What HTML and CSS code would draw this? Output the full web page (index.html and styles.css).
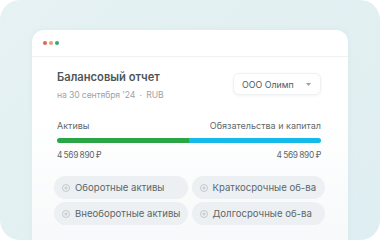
FILE: index.html
```html
<!DOCTYPE html>
<html lang="ru">
<head>
<meta charset="utf-8">
<link rel="stylesheet" href="styles.css">
</head>
<body>
<div class="frame">
  <div class="card">
    <div class="titlebar">
      <span class="dot red"></span><span class="dot orange"></span><span class="dot green"></span>
    </div>
    <div class="content">
      <div class="head">
        <div class="heading">
          <div class="title">Балансовый отчет</div>
          <div class="subtitle">на 30 сентября '24 <span class="sep">·</span> RUB</div>
        </div>
        <div class="select">
          <span>ООО Олимп</span>
          <svg class="caret" width="5" height="3" viewBox="0 0 5 3"><path d="M0 0h5L2.5 3z" fill="#9aa2a5"/></svg>
        </div>
      </div>
      <div class="row labels">
        <span>Активы</span>
        <span>Обязательства и капитал</span>
      </div>
      <div class="bar">
        <div class="bar-assets" style="width:50%"></div>
        <div class="bar-liab"></div>
      </div>
      <div class="row values">
        <span>4 569 890 ₽</span>
        <span>4 569 890 ₽</span>
      </div>
      <div class="chips">
        <div class="chip"><svg class="plus" width="8" height="8" viewBox="0 0 8 8"><circle cx="4" cy="4" r="3.5" fill="none" stroke="#b9c0c3" stroke-width="0.8"/><path d="M4 2.4v3.2M2.4 4h3.2" stroke="#b9c0c3" stroke-width="0.8"/></svg><span>Оборотные активы</span></div>
        <div class="chip"><svg class="plus" width="8" height="8" viewBox="0 0 8 8"><circle cx="4" cy="4" r="3.5" fill="none" stroke="#b9c0c3" stroke-width="0.8"/><path d="M4 2.4v3.2M2.4 4h3.2" stroke="#b9c0c3" stroke-width="0.8"/></svg><span>Краткосрочные об-ва</span></div>
        <div class="chip"><svg class="plus" width="8" height="8" viewBox="0 0 8 8"><circle cx="4" cy="4" r="3.5" fill="none" stroke="#b9c0c3" stroke-width="0.8"/><path d="M4 2.4v3.2M2.4 4h3.2" stroke="#b9c0c3" stroke-width="0.8"/></svg><span>Внеоборотные активы</span></div>
        <div class="chip"><svg class="plus" width="8" height="8" viewBox="0 0 8 8"><circle cx="4" cy="4" r="3.5" fill="none" stroke="#b9c0c3" stroke-width="0.8"/><path d="M4 2.4v3.2M2.4 4h3.2" stroke="#b9c0c3" stroke-width="0.8"/></svg><span>Долгосрочные об-ва</span></div>
      </div>
    </div>
  </div>
</div>
</body>
</html>
```
FILE: styles.css
```css
html, body {
  margin: 0;
  padding: 0;
  background: #ffffff;
}
body {
  font-family: Inter, "Noto Sans", sans-serif;
}
.frame {
  width: 380px;
  height: 240px;
  box-sizing: border-box;
  border-radius: 20px;
  background: linear-gradient(135deg, #e6f2f3 0%, #dfeef1 100%);
  padding: 30px 32px 0;
  overflow: hidden;
}
.card {
  height: 230px;
  background: linear-gradient(180deg, #ffffff 0%, #ffffff 40%, #f5f8f9 100%);
  border-radius: 12px 12px 0 0;
  box-shadow: 0 0 6px rgba(120, 150, 160, 0.08);
}
.titlebar {
  height: 26px;
  display: flex;
  align-items: center;
  gap: 2px;
  padding-left: 11px;
  border-bottom: 1px solid #eef2f3;
}
.dot {
  width: 4px;
  height: 4px;
  border-radius: 50%;
}
.dot.red { background: #d9675e; }
.dot.orange { background: #e3a273; }
.dot.green { background: #3aa676; }
.content {
  padding: 13px 27px 0 25px;
}
.head {
  display: flex;
  justify-content: space-between;
  align-items: flex-start;
}
.title {
  font-size: 11.2px;
  line-height: 15px;
  font-weight: 600;
  color: #4d5659;
}
.subtitle {
  margin-top: 5px;
  font-size: 8.6px;
  line-height: 11px;
  color: #9aa3a6;
  letter-spacing: -0.1px;
}
.sep {
  margin: 0 2px;
}
.select {
  margin-top: 3px;
  width: 88px;
  height: 22px;
  box-sizing: border-box;
  border: 1px solid #eef1f2;
  border-radius: 6px;
  box-shadow: 0 1px 3px rgba(60, 80, 90, 0.07);
  background: #ffffff;
  display: flex;
  align-items: center;
  justify-content: space-between;
  padding: 0 9px 0 8px;
  font-size: 8.8px;
  color: #4f5a5d;
}
.row {
  display: flex;
  justify-content: space-between;
  font-size: 9px;
  line-height: 12px;
}
.labels {
  margin-top: 19px;
  color: #5f696c;
}
.bar {
  margin-top: 6px;
  height: 5px;
  border-radius: 3px;
  overflow: hidden;
  display: flex;
}
.bar-assets {
  background: #2ba646;
}
.bar-liab {
  flex: 1;
  background: #15b9ea;
}
.values {
  margin-top: 6px;
  color: #5d676a;
  font-size: 8.4px;
  letter-spacing: -0.3px;
  word-spacing: -0.6px;
}
.chips {
  margin: 15px -4px 0 -3px;
  display: grid;
  grid-template-columns: 1fr 1fr;
  column-gap: 4px;
  row-gap: 3px;
}
.chip {
  height: 23px;
  border-radius: 12px;
  background: #edf0f2;
  display: flex;
  align-items: center;
  gap: 5px;
  padding-left: 8px;
  font-size: 9.6px;
  color: #5b6669;
}
.plus {
  flex: none;
}
```
